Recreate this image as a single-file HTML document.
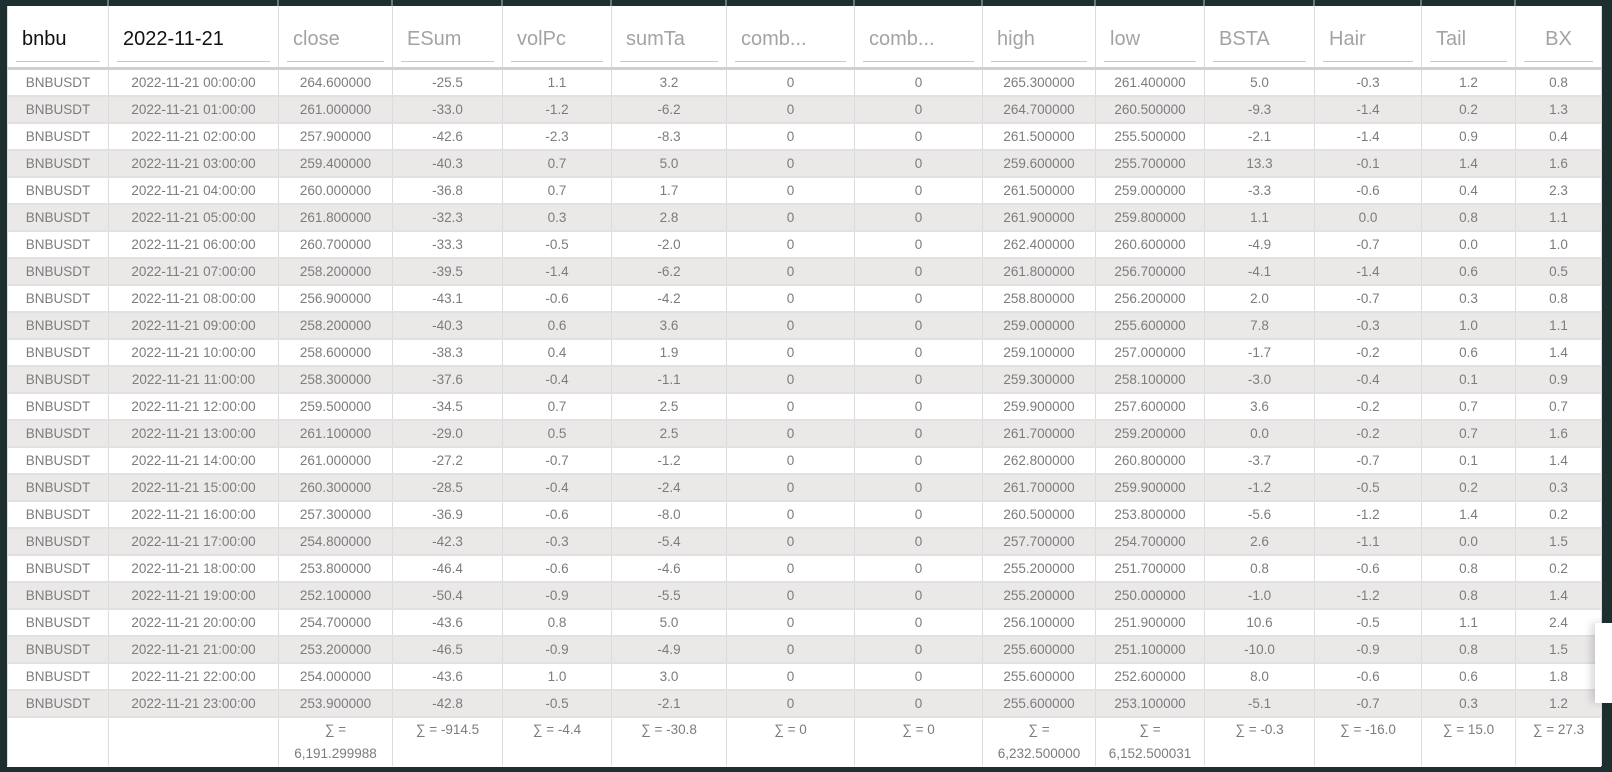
<!DOCTYPE html>
<html><head><meta charset="utf-8"><style>
html,body{margin:0;padding:0;background:#1d2f2f;width:1612px;height:772px;overflow:hidden;font-family:"Liberation Sans",sans-serif}
#wrap{position:absolute;left:7px;top:6px;width:1594px;height:761px;background:#fff}
table{border-collapse:collapse;table-layout:fixed;width:1594px}
td,th{border-left:1px solid #dcdcdc;border-right:1px solid #dcdcdc;text-align:center;padding:0;overflow:hidden;white-space:nowrap}
th{height:61px;font-weight:normal;font-size:20px;color:#a3a3a3;border-bottom:3px solid #d0d0d0;vertical-align:top}
th div{margin:22px 8px 0 8px;border-bottom:1px solid #c8c8c8;height:33px;text-align:left;padding-left:6px}
th.c div{text-align:center;padding-left:0}
th.b{color:#111}
td{height:25px;border-bottom:2px solid #e2e0e0;font-size:13.5px;color:#7c7c7c}
tbody tr:nth-child(even) td{background:#ebe8e8}
tr.f td{height:48px;vertical-align:top;line-height:24px;border-bottom:none}
.sep{position:absolute;top:0;width:2px;height:6px;background:#6c7878}
#pop{position:absolute;left:1595px;top:623px;width:17px;height:80px;background:#fff;box-shadow:-4px 0 8px rgba(0,0,0,.15)}
</style></head><body>
<div class="sep" style="left:107px"></div><div class="sep" style="left:277px"></div><div class="sep" style="left:391px"></div><div class="sep" style="left:501px"></div><div class="sep" style="left:610px"></div><div class="sep" style="left:725px"></div><div class="sep" style="left:853px"></div><div class="sep" style="left:981px"></div><div class="sep" style="left:1094px"></div><div class="sep" style="left:1203px"></div><div class="sep" style="left:1313px"></div><div class="sep" style="left:1420px"></div><div class="sep" style="left:1514px"></div>
<div id="wrap"><table>
<colgroup><col style="width:101px"><col style="width:170px"><col style="width:114px"><col style="width:110px"><col style="width:109px"><col style="width:115px"><col style="width:128px"><col style="width:128px"><col style="width:113px"><col style="width:109px"><col style="width:110px"><col style="width:107px"><col style="width:94px"><col style="width:86px"></colgroup>
<thead><tr><th class="b"><div>bnbu</div></th><th class="b"><div>2022-11-21</div></th><th><div>close</div></th><th><div>ESum</div></th><th><div>volPc</div></th><th><div>sumTa</div></th><th><div>comb...</div></th><th><div>comb...</div></th><th><div>high</div></th><th><div>low</div></th><th><div>BSTA</div></th><th><div>Hair</div></th><th><div>Tail</div></th><th class="c"><div>BX</div></th></tr></thead>
<tbody>
<tr><td>BNBUSDT</td><td>2022-11-21 00:00:00</td><td>264.600000</td><td>-25.5</td><td>1.1</td><td>3.2</td><td>0</td><td>0</td><td>265.300000</td><td>261.400000</td><td>5.0</td><td>-0.3</td><td>1.2</td><td>0.8</td></tr>
<tr><td>BNBUSDT</td><td>2022-11-21 01:00:00</td><td>261.000000</td><td>-33.0</td><td>-1.2</td><td>-6.2</td><td>0</td><td>0</td><td>264.700000</td><td>260.500000</td><td>-9.3</td><td>-1.4</td><td>0.2</td><td>1.3</td></tr>
<tr><td>BNBUSDT</td><td>2022-11-21 02:00:00</td><td>257.900000</td><td>-42.6</td><td>-2.3</td><td>-8.3</td><td>0</td><td>0</td><td>261.500000</td><td>255.500000</td><td>-2.1</td><td>-1.4</td><td>0.9</td><td>0.4</td></tr>
<tr><td>BNBUSDT</td><td>2022-11-21 03:00:00</td><td>259.400000</td><td>-40.3</td><td>0.7</td><td>5.0</td><td>0</td><td>0</td><td>259.600000</td><td>255.700000</td><td>13.3</td><td>-0.1</td><td>1.4</td><td>1.6</td></tr>
<tr><td>BNBUSDT</td><td>2022-11-21 04:00:00</td><td>260.000000</td><td>-36.8</td><td>0.7</td><td>1.7</td><td>0</td><td>0</td><td>261.500000</td><td>259.000000</td><td>-3.3</td><td>-0.6</td><td>0.4</td><td>2.3</td></tr>
<tr><td>BNBUSDT</td><td>2022-11-21 05:00:00</td><td>261.800000</td><td>-32.3</td><td>0.3</td><td>2.8</td><td>0</td><td>0</td><td>261.900000</td><td>259.800000</td><td>1.1</td><td>0.0</td><td>0.8</td><td>1.1</td></tr>
<tr><td>BNBUSDT</td><td>2022-11-21 06:00:00</td><td>260.700000</td><td>-33.3</td><td>-0.5</td><td>-2.0</td><td>0</td><td>0</td><td>262.400000</td><td>260.600000</td><td>-4.9</td><td>-0.7</td><td>0.0</td><td>1.0</td></tr>
<tr><td>BNBUSDT</td><td>2022-11-21 07:00:00</td><td>258.200000</td><td>-39.5</td><td>-1.4</td><td>-6.2</td><td>0</td><td>0</td><td>261.800000</td><td>256.700000</td><td>-4.1</td><td>-1.4</td><td>0.6</td><td>0.5</td></tr>
<tr><td>BNBUSDT</td><td>2022-11-21 08:00:00</td><td>256.900000</td><td>-43.1</td><td>-0.6</td><td>-4.2</td><td>0</td><td>0</td><td>258.800000</td><td>256.200000</td><td>2.0</td><td>-0.7</td><td>0.3</td><td>0.8</td></tr>
<tr><td>BNBUSDT</td><td>2022-11-21 09:00:00</td><td>258.200000</td><td>-40.3</td><td>0.6</td><td>3.6</td><td>0</td><td>0</td><td>259.000000</td><td>255.600000</td><td>7.8</td><td>-0.3</td><td>1.0</td><td>1.1</td></tr>
<tr><td>BNBUSDT</td><td>2022-11-21 10:00:00</td><td>258.600000</td><td>-38.3</td><td>0.4</td><td>1.9</td><td>0</td><td>0</td><td>259.100000</td><td>257.000000</td><td>-1.7</td><td>-0.2</td><td>0.6</td><td>1.4</td></tr>
<tr><td>BNBUSDT</td><td>2022-11-21 11:00:00</td><td>258.300000</td><td>-37.6</td><td>-0.4</td><td>-1.1</td><td>0</td><td>0</td><td>259.300000</td><td>258.100000</td><td>-3.0</td><td>-0.4</td><td>0.1</td><td>0.9</td></tr>
<tr><td>BNBUSDT</td><td>2022-11-21 12:00:00</td><td>259.500000</td><td>-34.5</td><td>0.7</td><td>2.5</td><td>0</td><td>0</td><td>259.900000</td><td>257.600000</td><td>3.6</td><td>-0.2</td><td>0.7</td><td>0.7</td></tr>
<tr><td>BNBUSDT</td><td>2022-11-21 13:00:00</td><td>261.100000</td><td>-29.0</td><td>0.5</td><td>2.5</td><td>0</td><td>0</td><td>261.700000</td><td>259.200000</td><td>0.0</td><td>-0.2</td><td>0.7</td><td>1.6</td></tr>
<tr><td>BNBUSDT</td><td>2022-11-21 14:00:00</td><td>261.000000</td><td>-27.2</td><td>-0.7</td><td>-1.2</td><td>0</td><td>0</td><td>262.800000</td><td>260.800000</td><td>-3.7</td><td>-0.7</td><td>0.1</td><td>1.4</td></tr>
<tr><td>BNBUSDT</td><td>2022-11-21 15:00:00</td><td>260.300000</td><td>-28.5</td><td>-0.4</td><td>-2.4</td><td>0</td><td>0</td><td>261.700000</td><td>259.900000</td><td>-1.2</td><td>-0.5</td><td>0.2</td><td>0.3</td></tr>
<tr><td>BNBUSDT</td><td>2022-11-21 16:00:00</td><td>257.300000</td><td>-36.9</td><td>-0.6</td><td>-8.0</td><td>0</td><td>0</td><td>260.500000</td><td>253.800000</td><td>-5.6</td><td>-1.2</td><td>1.4</td><td>0.2</td></tr>
<tr><td>BNBUSDT</td><td>2022-11-21 17:00:00</td><td>254.800000</td><td>-42.3</td><td>-0.3</td><td>-5.4</td><td>0</td><td>0</td><td>257.700000</td><td>254.700000</td><td>2.6</td><td>-1.1</td><td>0.0</td><td>1.5</td></tr>
<tr><td>BNBUSDT</td><td>2022-11-21 18:00:00</td><td>253.800000</td><td>-46.4</td><td>-0.6</td><td>-4.6</td><td>0</td><td>0</td><td>255.200000</td><td>251.700000</td><td>0.8</td><td>-0.6</td><td>0.8</td><td>0.2</td></tr>
<tr><td>BNBUSDT</td><td>2022-11-21 19:00:00</td><td>252.100000</td><td>-50.4</td><td>-0.9</td><td>-5.5</td><td>0</td><td>0</td><td>255.200000</td><td>250.000000</td><td>-1.0</td><td>-1.2</td><td>0.8</td><td>1.4</td></tr>
<tr><td>BNBUSDT</td><td>2022-11-21 20:00:00</td><td>254.700000</td><td>-43.6</td><td>0.8</td><td>5.0</td><td>0</td><td>0</td><td>256.100000</td><td>251.900000</td><td>10.6</td><td>-0.5</td><td>1.1</td><td>2.4</td></tr>
<tr><td>BNBUSDT</td><td>2022-11-21 21:00:00</td><td>253.200000</td><td>-46.5</td><td>-0.9</td><td>-4.9</td><td>0</td><td>0</td><td>255.600000</td><td>251.100000</td><td>-10.0</td><td>-0.9</td><td>0.8</td><td>1.5</td></tr>
<tr><td>BNBUSDT</td><td>2022-11-21 22:00:00</td><td>254.000000</td><td>-43.6</td><td>1.0</td><td>3.0</td><td>0</td><td>0</td><td>255.600000</td><td>252.600000</td><td>8.0</td><td>-0.6</td><td>0.6</td><td>1.8</td></tr>
<tr><td>BNBUSDT</td><td>2022-11-21 23:00:00</td><td>253.900000</td><td>-42.8</td><td>-0.5</td><td>-2.1</td><td>0</td><td>0</td><td>255.600000</td><td>253.100000</td><td>-5.1</td><td>-0.7</td><td>0.3</td><td>1.2</td></tr>
<tr class="f"><td></td><td></td><td>∑ =<br>6,191.299988</td><td>∑ = -914.5</td><td>∑ = -4.4</td><td>∑ = -30.8</td><td>∑ = 0</td><td>∑ = 0</td><td>∑ =<br>6,232.500000</td><td>∑ =<br>6,152.500031</td><td>∑ = -0.3</td><td>∑ = -16.0</td><td>∑ = 15.0</td><td>∑ = 27.3</td></tr>
</tbody></table></div>
<div id="pop"></div>
</body></html>
